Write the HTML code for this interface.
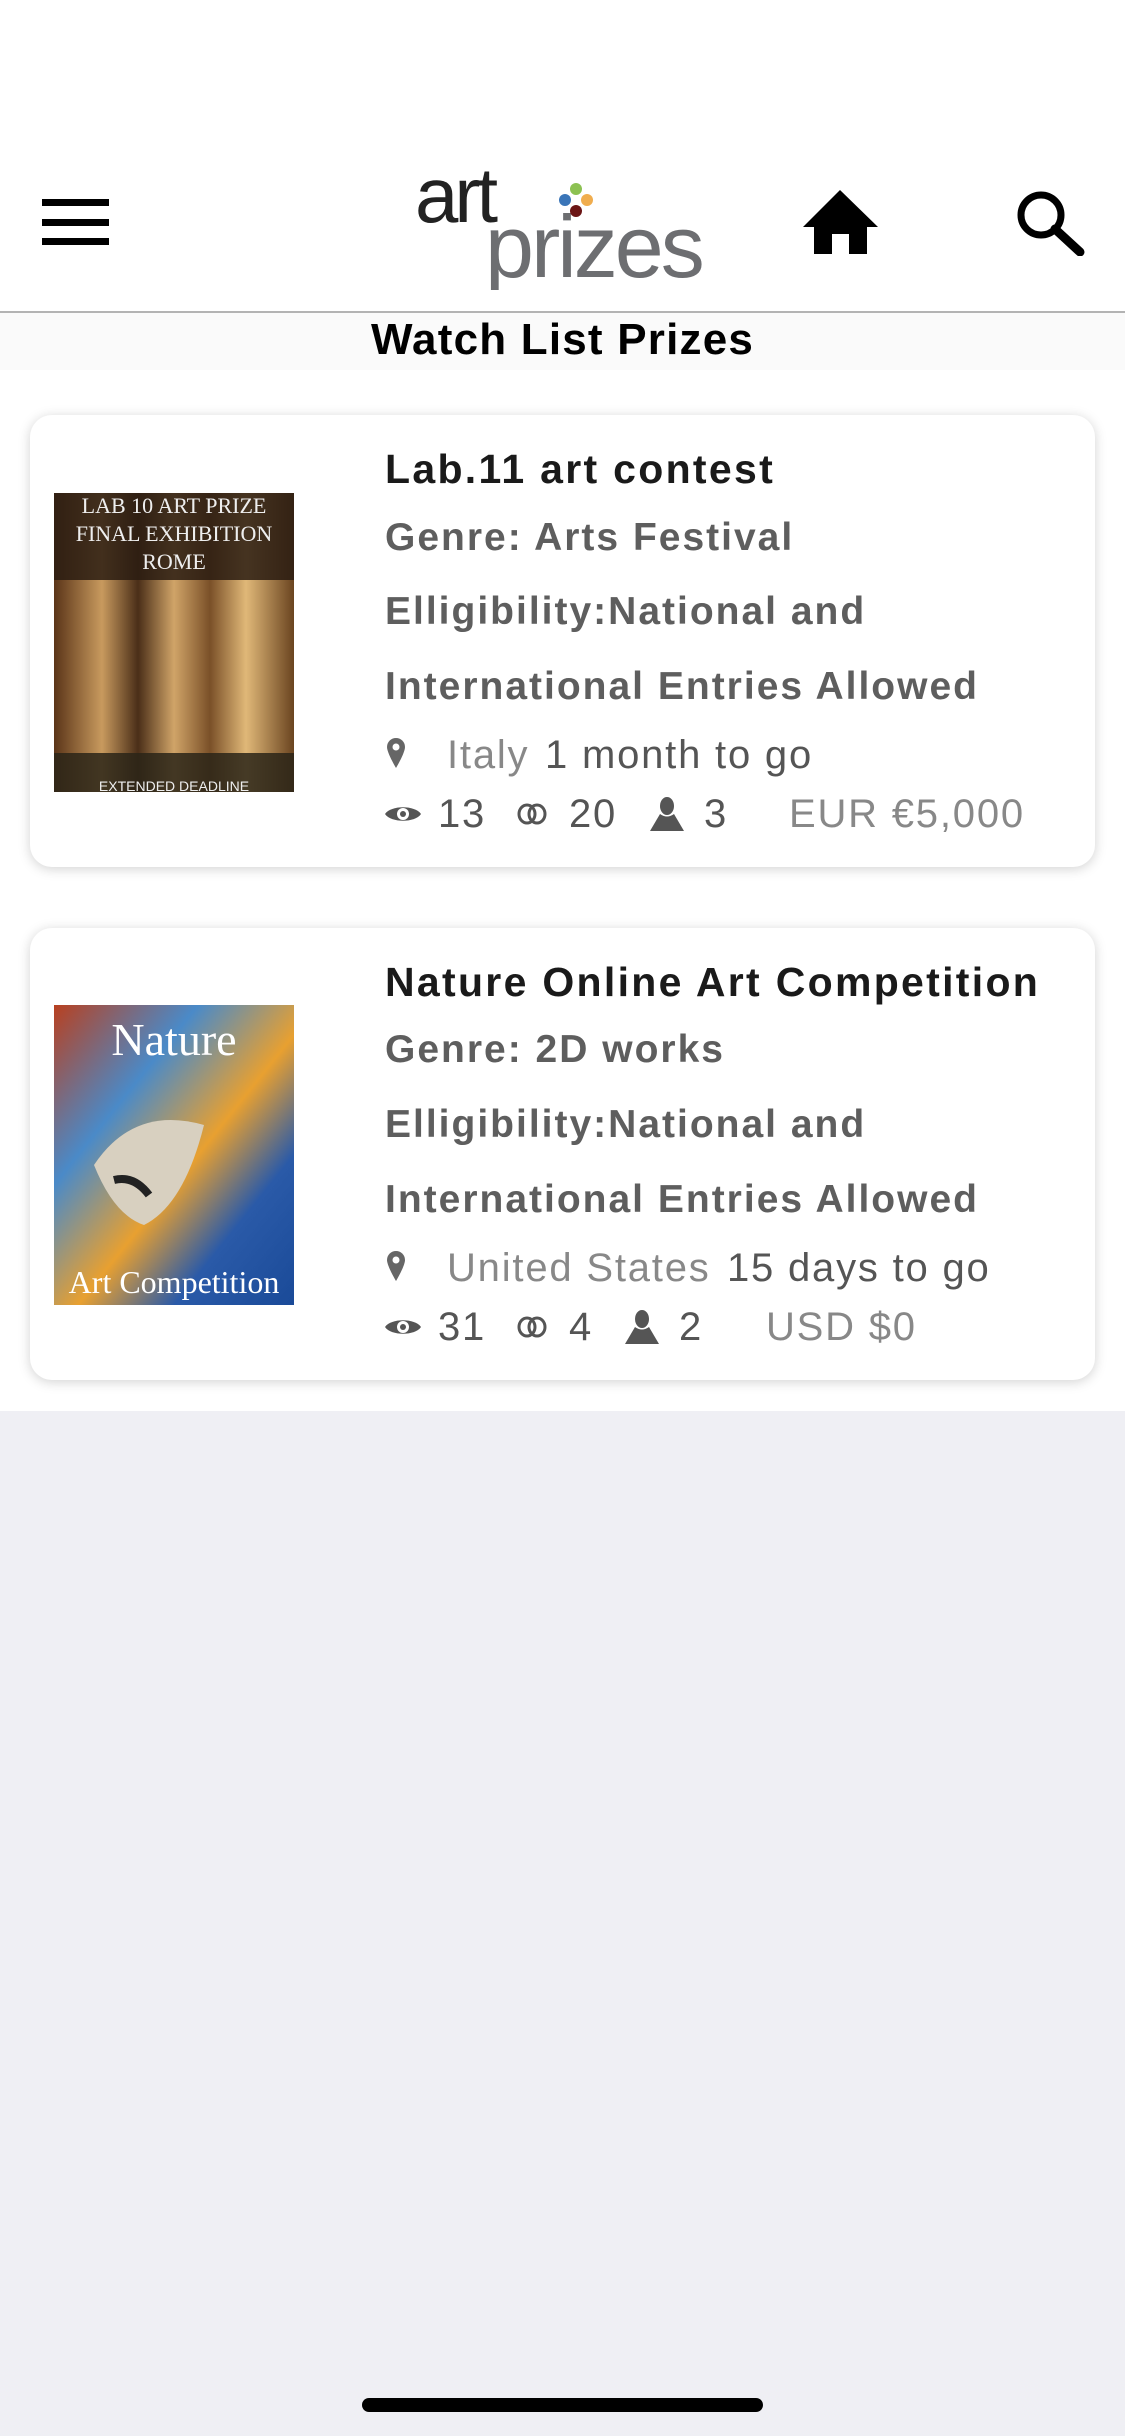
<!DOCTYPE html>
<html><head><meta charset="utf-8"><style>
*{margin:0;padding:0;box-sizing:border-box}
body{width:1125px;height:2436px;background:#efeff4;font-family:"Liberation Sans",sans-serif;position:relative;overflow:hidden}
.a{position:absolute}
.t{position:absolute;height:60px;line-height:60px;white-space:nowrap}
.card{position:absolute;left:30px;width:1065px;background:#fff;border-radius:22px;box-shadow:0 2px 12px rgba(0,0,0,.18)}
.h{font-size:41px;color:#1a1a1a;font-weight:bold;letter-spacing:2.3px}
.g{font-size:39px;color:#5e5e5e;font-weight:bold;letter-spacing:2.0px}
.s{font-size:40px;color:#555;letter-spacing:1.8px}
.l{font-size:40px;color:#888;letter-spacing:1.8px}
</style></head><body>
<div class="a" style="left:0;top:0;width:1125px;height:1411px;background:#fff"></div>
<div class="a" style="left:0;top:311px;width:1125px;height:2px;background:#b3b3b3"></div>
<div class="a" style="left:0;top:313px;width:1125px;height:57px;background:#fafafa"></div>
<div class="t" style="left:0;width:1125px;top:310px;text-align:center;font-size:44px;color:#000;font-weight:bold;letter-spacing:1.2px">Watch List Prizes</div>

<div class="a" style="left:42px;top:199px;width:67px;height:7px;background:#000"></div>
<div class="a" style="left:42px;top:219px;width:67px;height:7px;background:#000"></div>
<div class="a" style="left:42px;top:238px;width:67px;height:7px;background:#000"></div>
<svg class="a" style="left:415px;top:160px" width="300" height="130" viewBox="0 0 300 130">
<text x="0" y="62" font-family="Liberation Sans" font-size="78" fill="#222" letter-spacing="-4">art</text>
<text x="70" y="117" font-family="Liberation Sans" font-size="88" fill="#6d6e71" letter-spacing="-3">prizes</text>
<circle cx="161" cy="29" r="6" fill="#8cc152"/><circle cx="150" cy="40" r="6" fill="#3a75b8"/><circle cx="172" cy="40" r="6" fill="#f0ad4e"/><circle cx="161" cy="51" r="6" fill="#6b1515"/>
</svg>
<svg class="a" style="left:803px;top:190px" width="75" height="64" viewBox="0 0 75 64"><path d="M37 0 L75 37 L64 37 L64 64 L46 64 L46 44 L29 44 L29 64 L11 64 L11 37 L0 37Z" fill="#000"/></svg>
<svg class="a" style="left:1014px;top:188px" width="72" height="68" viewBox="0 0 72 68"><circle cx="27" cy="27" r="20" fill="none" stroke="#000" stroke-width="7"/><path d="M41 41 L66 64" stroke="#000" stroke-width="9" stroke-linecap="round"/></svg>

<div class="card" style="top:415px;height:452px"></div>
<svg class="a" style="left:54px;top:493px" width="240" height="299" viewBox="0 0 240 299">
<defs><linearGradient id="c1" x1="0" x2="1"><stop offset="0" stop-color="#5a3418"/><stop offset=".2" stop-color="#c89a5e"/><stop offset=".35" stop-color="#4a2e18"/><stop offset=".5" stop-color="#d0a468"/><stop offset=".65" stop-color="#7a5028"/><stop offset=".8" stop-color="#e0b878"/><stop offset="1" stop-color="#6a4420"/></linearGradient></defs>
<rect width="240" height="299" fill="url(#c1)"/><rect width="240" height="87" fill="#2a1c12" opacity=".85"/><rect y="260" width="240" height="39" fill="#2a2418" opacity=".85"/>
<text x="120" y="20" font-family="Liberation Serif" font-size="22" fill="#eee" text-anchor="middle">LAB 10 ART PRIZE</text>
<text x="120" y="48" font-family="Liberation Serif" font-size="22" fill="#eee" text-anchor="middle">FINAL EXHIBITION</text>
<text x="120" y="76" font-family="Liberation Serif" font-size="22" fill="#eee" text-anchor="middle">ROME</text>
<text x="120" y="298" font-family="Liberation Sans" font-size="14" fill="#eee" text-anchor="middle">EXTENDED DEADLINE</text></svg>
<div class="t h" style="left:385px;top:439px">Lab.11 art contest</div>
<div class="t g" style="left:385px;top:508px">Genre: Arts Festival</div>
<div class="t g" style="left:385px;top:582px">Elligibility:National and</div>
<div class="t g" style="left:385px;top:657px">International Entries Allowed</div>
<svg class="a" style="left:387px;top:738px" width="18" height="30" viewBox="0 0 18 30"><path d="M9 0a9 9 0 0 1 9 9c0 6-9 21-9 21S0 15 0 9a9 9 0 0 1 9-9z" fill="#666"/><circle cx="9" cy="9" r="3.5" fill="#fff"/></svg>
<div class="t l" style="left:447px;top:725px">Italy</div>
<div class="t s" style="left:545px;top:725px">1 month to go</div>
<svg class="a" style="left:385px;top:803px" width="36" height="22" viewBox="0 0 36 22"><path d="M0 11C6 2 30 2 36 11C30 20 6 20 0 11Z" fill="#555"/><circle cx="18" cy="11" r="6" fill="#fff"/><circle cx="18" cy="11" r="3" fill="#555"/></svg>
<div class="t s" style="left:438px;top:784px">13</div>
<svg class="a" style="left:517px;top:803px" width="30" height="22" viewBox="0 0 30 22"><ellipse cx="10" cy="11" rx="8" ry="9" fill="none" stroke="#555" stroke-width="3"/><ellipse cx="20" cy="11" rx="8" ry="9" fill="none" stroke="#555" stroke-width="3"/></svg>
<div class="t s" style="left:569px;top:784px">20</div>
<svg class="a" style="left:650px;top:797px" width="34" height="34" viewBox="0 0 34 34"><ellipse cx="17" cy="9" rx="7" ry="9" fill="#555"/><path d="M10 17Q17 22 24 17L34 34H0Z" fill="#555"/></svg>
<div class="t s" style="left:704px;top:784px">3</div>
<div class="t l" style="left:789px;top:784px">EUR €5,000</div>

<div class="card" style="top:928px;height:452px"></div>
<svg class="a" style="left:54px;top:1005px" width="240" height="300" viewBox="0 0 240 300">
<defs><linearGradient id="c2" x1="0" y1="0" x2="1" y2="1"><stop offset="0" stop-color="#b84020"/><stop offset=".3" stop-color="#4a8ac8"/><stop offset=".55" stop-color="#e8a030"/><stop offset=".75" stop-color="#2a5aa8"/><stop offset="1" stop-color="#1a4a98"/></linearGradient></defs>
<rect width="240" height="300" fill="url(#c2)"/><path d="M40 160Q80 100 150 120Q130 200 90 220Q60 210 40 160Z" fill="#d8d0c0"/><path d="M60 175Q80 170 95 190" stroke="#222" stroke-width="8" fill="none"/>
<text x="120" y="50" font-family="Liberation Serif" font-size="46" fill="#fff" text-anchor="middle">Nature</text>
<text x="120" y="288" font-family="Liberation Serif" font-size="32" fill="#fff" text-anchor="middle">Art Competition</text></svg>
<div class="t h" style="left:385px;top:952px">Nature Online Art Competition</div>
<div class="t g" style="left:385px;top:1020px">Genre: 2D works</div>
<div class="t g" style="left:385px;top:1095px">Elligibility:National and</div>
<div class="t g" style="left:385px;top:1170px">International Entries Allowed</div>
<svg class="a" style="left:387px;top:1251px" width="18" height="30" viewBox="0 0 18 30"><path d="M9 0a9 9 0 0 1 9 9c0 6-9 21-9 21S0 15 0 9a9 9 0 0 1 9-9z" fill="#666"/><circle cx="9" cy="9" r="3.5" fill="#fff"/></svg>
<div class="t l" style="left:447px;top:1238px">United States</div>
<div class="t s" style="left:727px;top:1238px">15 days to go</div>
<svg class="a" style="left:385px;top:1316px" width="36" height="22" viewBox="0 0 36 22"><path d="M0 11C6 2 30 2 36 11C30 20 6 20 0 11Z" fill="#555"/><circle cx="18" cy="11" r="6" fill="#fff"/><circle cx="18" cy="11" r="3" fill="#555"/></svg>
<div class="t s" style="left:438px;top:1297px">31</div>
<svg class="a" style="left:517px;top:1316px" width="30" height="22" viewBox="0 0 30 22"><ellipse cx="10" cy="11" rx="8" ry="9" fill="none" stroke="#555" stroke-width="3"/><ellipse cx="20" cy="11" rx="8" ry="9" fill="none" stroke="#555" stroke-width="3"/></svg>
<div class="t s" style="left:569px;top:1297px">4</div>
<svg class="a" style="left:625px;top:1310px" width="34" height="34" viewBox="0 0 34 34"><ellipse cx="17" cy="9" rx="7" ry="9" fill="#555"/><path d="M10 17Q17 22 24 17L34 34H0Z" fill="#555"/></svg>
<div class="t s" style="left:679px;top:1297px">2</div>
<div class="t l" style="left:766px;top:1297px">USD $0</div>

<div class="a" style="left:362px;top:2398px;width:401px;height:14px;border-radius:7px;background:#000"></div>
</body></html>
